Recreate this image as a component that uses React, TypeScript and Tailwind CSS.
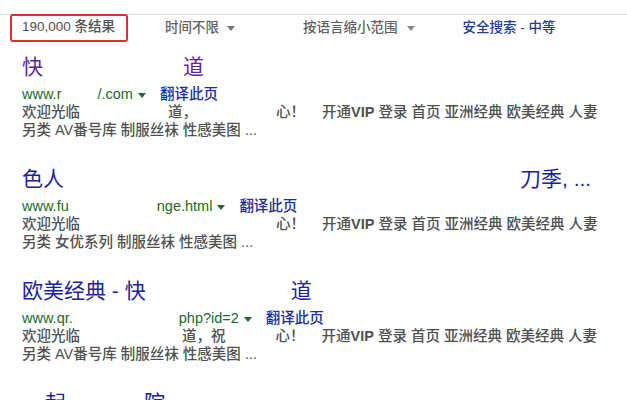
import React from "react";

const font = "font-[family-name:'Liberation_Sans','Noto_Sans_CJK_SC',sans-serif]";

function Caret({ color }: { color: string }) {
  return (
    <svg width="8" height="5" viewBox="0 0 8 5" className="inline-block align-middle" aria-hidden>
      <polygon points="0,0 8,0 4,5" fill={color} />
    </svg>
  );
}

function Gap({ w }: { w: string }) {
  return <span className={`inline-block ${w}`} />;
}

const tail = (
  <>
    开通<b className="font-bold">VIP</b> 登录 首页 亚洲经典 欧美经典 人妻
  </>
);

export default function App() {
  return (
    <div className={`h-[400px] w-[627px] overflow-hidden bg-white ${font}`}>
      {/* search tools bar */}
      <div className="mt-[14px] flex h-[27px] items-center border-t border-[#dcdcdc] text-[13.5px] font-medium text-[#616161]">
        <div className="-mt-px ml-[10px] flex h-[28px] w-[118px] items-center rounded-[3px] border-2 border-[#dc2f2f] pl-[10px] text-[#505050]">
          190,000 条结果
        </div>
        <div className="ml-[37px] flex items-center gap-[8px]">
          时间不限 <Caret color="#777" />
        </div>
        <div className="ml-[68px] flex items-center gap-[9px]">
          按语言缩小范围 <Caret color="#888" />
        </div>
        <div className="ml-[48px] text-[#1f3c9c]">安全搜索 - 中等</div>
      </div>

      {/* results */}
      <div className="flex flex-col gap-[24px] pl-[22px] pt-[10px]">
        <div>
          <div className="text-[21px] leading-[32px] text-[#5f1e9c]">
            快<Gap w="w-[140px]" />道
          </div>
          <div className="mt-[2px] flex items-center text-[14.5px] font-medium leading-[18px]">
            <span className="text-[#1a6b2c]">www.r</span>
            <Gap w="w-[36px]" />
            <span className="text-[#1a6b2c]">/.com</span>
            <span className="ml-[5px]"><Caret color="#1a6b2c" /></span>
            <span className="ml-[14px] text-[#1a2ea0]">翻译此页</span>
          </div>
          <div className="text-[14.5px] font-medium leading-[18px] text-[#505050]">
            <div>
              欢迎光临<Gap w="w-[88px]" />道，<Gap w="w-[79px]" />心！<Gap w="w-[17px]" />{tail}
            </div>
            <div>另类 AV番号库 制服丝袜 性感美图 ...</div>
          </div>
        </div>

        <div>
          <div className="text-[21px] leading-[32px] text-[#1a22a0]">
            色人<Gap w="w-[456px]" />刀季, ...
          </div>
          <div className="mt-[2px] flex items-center text-[14.5px] font-medium leading-[18px]">
            <span className="text-[#1a6b2c]">www.fu</span>
            <Gap w="w-[88px]" />
            <span className="text-[#1a6b2c]">nge.html</span>
            <span className="ml-[5px]"><Caret color="#1a6b2c" /></span>
            <span className="ml-[14px] text-[#1a2ea0]">翻译此页</span>
          </div>
          <div className="text-[14.5px] font-medium leading-[18px] text-[#505050]">
            <div>
              欢迎光临<Gap w="w-[196px]" />心！<Gap w="w-[17px]" />{tail}
            </div>
            <div>另类 女优系列 制服丝袜 性感美图 ...</div>
          </div>
        </div>

        <div>
          <div className="text-[21px] leading-[32px] text-[#1a22a0]">
            欧美经典 - 快<Gap w="w-[145px]" />道
          </div>
          <div className="mt-[2px] flex items-center text-[14.5px] font-medium leading-[18px]">
            <span className="text-[#1a6b2c]">www.qr.</span>
            <Gap w="w-[106px]" />
            <span className="text-[#1a6b2c]">php?id=2</span>
            <span className="ml-[5px]"><Caret color="#1a6b2c" /></span>
            <span className="ml-[14px] text-[#1a2ea0]">翻译此页</span>
          </div>
          <div className="text-[14.5px] font-medium leading-[18px] text-[#505050]">
            <div>
              欢迎光临<Gap w="w-[102px]" />道，祝<Gap w="w-[50px]" />心！<Gap w="w-[17px]" />{tail}
            </div>
            <div>另类 AV番号库 制服丝袜 性感美图 ...</div>
          </div>
        </div>

        <div>
          <div className="text-[21px] leading-[32px] text-[#1a22a0]">
            <Gap w="w-[23px]" />起<Gap w="w-[78px]" />院
          </div>
        </div>
      </div>
    </div>
  );
}
